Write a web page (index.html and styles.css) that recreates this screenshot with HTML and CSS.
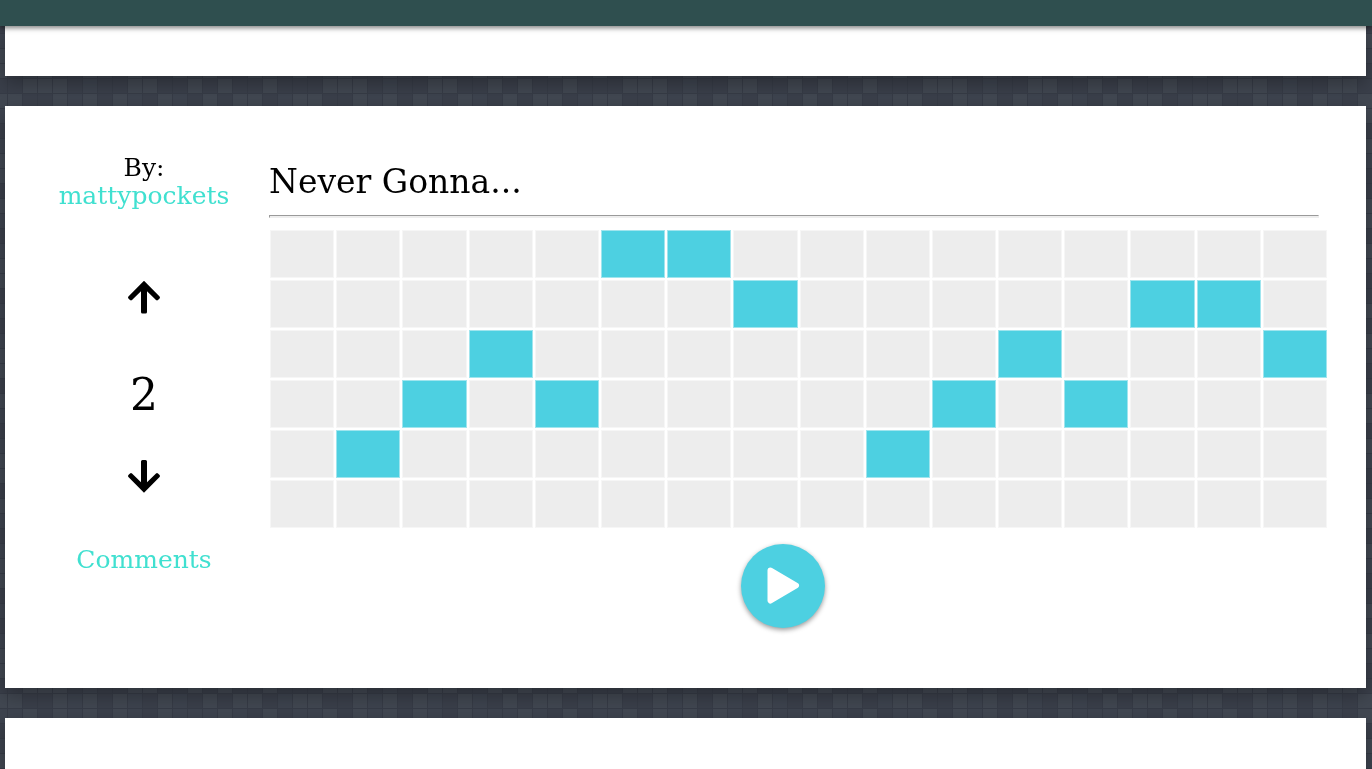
FILE: index.html
```html
<!DOCTYPE html>
<html lang="en">
<head>
<meta charset="utf-8">
<meta name="viewport" content="width=device-width, initial-scale=1">
<title>Songs</title>
<link rel="stylesheet" href="styles.css">
</head>
<body>
<svg class="backdrop" aria-hidden="true">
  <defs>
    <pattern id="tiles" x="8" y="4" width="300" height="300" patternUnits="userSpaceOnUse"></pattern>
  </defs>
  <rect width="100%" height="100%" fill="url(#tiles)"/>
</svg>
<header class="topbar"></header>
<main class="feed">
  <article class="card card-previous"></article>
  <article class="card song">
    <aside class="meta">
      <div class="author">By:<br><a href="#author">mattypockets</a></div>
      <div class="votes">
        <button class="vote" type="button" aria-label="Vote up">
          <svg viewBox="0 0 36 36" width="36" height="36"><path d="M18 1.800 33.600 17.400Q34.400 18.400 33.600 19.400L32 21Q31 21.800 30 21L21 12.200V33Q21 34.500 19.500 34.500H16.500Q15 34.500 15 33V12.200L6 21Q5 21.800 4 21L2.400 19.400Q1.600 18.400 2.400 17.400Z"/></svg>
        </button>
        <span class="score">2</span>
        <button class="vote" type="button" aria-label="Vote down">
          <svg viewBox="0 0 36 36" width="36" height="36"><path d="M18 34.700 33.600 19.100Q34.400 18.100 33.600 17.100L32 15.500Q31 14.700 30 15.500L21 24.300V3.500Q21 2 19.500 2H16.500Q15 2 15 3.500V24.300L6 15.500Q5 14.700 4 15.500L2.400 17.100Q1.600 18.100 2.400 19.100Z"/></svg>
        </button>
      </div>
      <a class="comments" href="#comments">Comments</a>
    </aside>
    <section class="player">
      <h2 class="title">Never Gonna...</h2>
      <hr class="rule">
      <div class="steps" id="steps"></div>
      <div class="transport">
        <button class="play" type="button" aria-label="Play">
          <svg viewBox="0 0 84 84" width="84" height="84"><path d="M29.500 26.500 55 41.500 29.500 56.500Z"/></svg>
        </button>
      </div>
    </section>
  </article>
  <article class="card card-next"></article>
</main>
<script src="app.js"></script>
</body>
</html>
```
FILE: styles.css
```css
* { box-sizing: border-box; }
body {
  margin: 0;
  background: #363b46;
  color: #000;
  font-family: "Roboto Slab", "DejaVu Serif", serif;
  overflow: hidden;
}
.backdrop {
  position: fixed;
  inset: 0;
  width: 100%;
  height: 100%;
  z-index: -1;
}
.tile-dark { fill: #3a3f4a; }
.tile-mid { fill: #3d434e; }
.tile-light { fill: #414751; }
.topbar {
  position: relative;
  z-index: 1;
  height: 26px;
  background: #2f4f4f;
  box-shadow: 0 2px 5px rgba(0, 0, 0, .5);
}
.feed {
  display: flex;
  flex-direction: column;
  gap: 30px;
  padding: 0 6px 0 5px;
}
.card {
  background: #fff;
  box-shadow: 0 8px 17px rgba(0, 0, 0, .2), 0 6px 20px rgba(0, 0, 0, .1);
}
.card-previous { height: 50px; }
.card-next { height: 52px; }
.song {
  display: grid;
  grid-template-columns: 188px 1fr;
  gap: 31px;
  padding: 48px 38px 60px 45px;
}
.meta {
  display: flex;
  flex-direction: column;
  align-items: center;
  font-size: 25px;
  line-height: 28px;
  text-align: center;
}
a { color: #40e0d0; text-decoration: none; }
button { padding: 0; border: 0; cursor: pointer; }
.votes {
  display: flex;
  flex-direction: column;
  align-items: center;
  padding: 69px 0 52px;
}
.vote { width: 36px; height: 36px; background: none; }
.vote svg, .play svg { display: block; }
.vote path { fill: #000; }
.score { padding: 56px 0 39px; font-size: 44px; line-height: 48px; }
.title {
  margin: 0;
  padding: 4px 0 9px;
  font-size: 33px;
  font-weight: 400;
  line-height: 48px;
}
.rule {
  height: 3px;
  margin: 0 9px 12px 0;
  border: 1px solid;
  border-color: #9a9a9a #eee #eee #9a9a9a;
  background: #eee;
}
.steps {
  display: grid;
  grid-template-columns: repeat(16, 1fr);
  grid-auto-rows: 48px;
  gap: 2px;
  padding: 0 1px;
}
.step { background: #ededed; border: 1px solid #f6f6f6; }
.step[aria-pressed="true"] { background: #4dd0e1; border-color: #a0e5ee; }
.transport {
  display: flex;
  justify-content: center;
  padding: 16px 31px 0 0;
}
.play {
  width: 84px;
  height: 84px;
  border-radius: 50%;
  background: #4dd0e1;
  box-shadow: 0 2px 5px rgba(0, 0, 0, .4);
}
.play path {
  fill: #fff;
  stroke: #fff;
  stroke-width: 6;
  stroke-linejoin: round;
}
```
FILE: app.js
```javascript
const melody = [
  "0000011000000000",
  "0000000100000110",
  "0001000000010001",
  "0010100000101000",
  "0100000001000000",
  "0000000000000000"
];

const steps = document.getElementById("steps");
melody.forEach((row, r) => {
  [...row].forEach((cell, c) => {
    const step = document.createElement("button");
    step.type = "button";
    step.className = "step";
    step.setAttribute("aria-label", `Note ${r + 1}, step ${c + 1}`);
    step.setAttribute("aria-pressed", cell === "1");
    steps.append(step);
  });
});

const shades = { D: "tile-dark", M: "tile-mid", L: "tile-light" };
const rows = [
  "MLDLMLDLMDLMMMLMDLDM",
  "DLDMDLLDMLDDLMDLMDLD",
  "MDLDLMDDLMLDDLMDLLDM",
  "LDMLDDMLDLMDLDMLDDML",
  "DMLDDLMDLDDLMLDDLMDL",
  "DLLLDMDDLLDDLDLDDLDD",
  "LDDLMLDLMDLMDLDLLDML"
];
const pattern = document.getElementById("tiles");
for (let r = 0; r < 20; r++) {
  const row = rows[r % rows.length];
  [...row].forEach((shade, c) => {
    const tile = document.createElementNS("http://www.w3.org/2000/svg", "rect");
    tile.setAttribute("x", c * 15);
    tile.setAttribute("y", r * 15);
    tile.setAttribute("width", 14);
    tile.setAttribute("height", 14);
    tile.setAttribute("class", shades[shade]);
    pattern.append(tile);
  });
}
```
